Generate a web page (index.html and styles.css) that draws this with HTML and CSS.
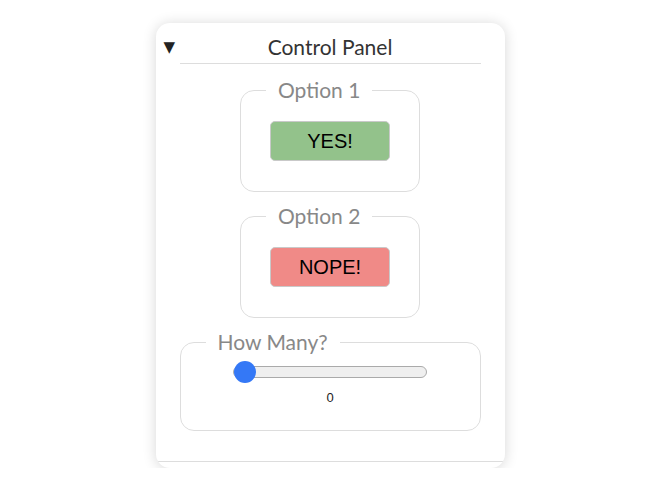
FILE: index.html
```html
<!DOCTYPE html>
<html lang="en">
<head>
  <meta charset="UTF-8">
  <title>Control Panel</title>
  <link rel="stylesheet" href="styles.css">
</head>
<body>

<div class="panel">
  <!-- 标题栏 -->
  <div class="panel-head">
    <span class="caret">&#9660;</span>
    <h3 class="title">Control Panel</h3>
  </div>

  <div class="panel-body">
    <fieldset class="group">
      <legend>Option 1</legend>
      <button class="btn btn-yes">YES!</button>
    </fieldset>

    <fieldset class="group">
      <legend>Option 2</legend>
      <button class="btn btn-no">NOPE!</button>
    </fieldset>

    <fieldset class="group group-wide">
      <legend>How Many?</legend>
      <input class="slider" type="range" min="0" max="10" value="0">
      <div class="count">0</div>
    </fieldset>
  </div>

  <div class="panel-foot"></div>
</div>

<script>
  var slider = document.querySelector(".slider");
  var count = document.querySelector(".count");
  slider.oninput = function() {
    count.innerHTML = slider.value;
  }
</script>

</body>
</html>
```

FILE: styles.css
```css
* {
  margin: 0;
  padding: 0;
  box-sizing: border-box;
}
body {
  font-family: Lato, "Noto Sans", sans-serif;
  background-color: #fff;
}
.panel {
  width: 349px;
  margin: 23px auto 0;
  padding-top: 12px;
  background-color: #fff;
  border-radius: 14px;
  box-shadow: 0 1px 14px rgba(0, 0, 0, 0.16);
  overflow: hidden;
}
/* 标题栏: 左边箭头, 中间标题 */
.panel-head {
  display: grid;
  grid-template-columns: 24px 1fr 24px;
  align-items: center;
}
.caret {
  padding-left: 8px;
  margin-bottom: 6px;
  font-family: "DejaVu Sans", sans-serif;
  font-size: 15px;
  line-height: 20px;
  color: #222;
}
.title {
  font-size: 21px;
  font-weight: normal;
  line-height: 24px;
  color: #333;
  text-align: center;
  padding-bottom: 4px;
  border-bottom: 1px solid #ddd;
}
.panel-body {
  display: flex;
  flex-direction: column;
  align-items: center;
  gap: 12px;
  padding: 14px 24px 30px;
}
.group {
  width: 180px;
  padding: 19px 0 30px;
  border: 1px solid #ddd;
  border-radius: 14px;
  text-align: center;
}
.group legend {
  margin-left: 25px;
  padding: 0 12px;
  font-size: 21px;
  line-height: 24px;
  color: #888;
  text-align: left;
}
.group-wide {
  width: 100%;
  padding: 7px 0 25px;
}
.btn {
  width: 120px;
  height: 40px;
  border: 1px solid #c9c9c9;
  border-radius: 5px;
  font-family: "Liberation Sans", Arial, sans-serif;
  font-size: 20px;
  color: #000;
  cursor: pointer;
}
.btn-yes {
  background-color: #93c28b;
}
.btn-no {
  background-color: #f08a87;
}
/* 滑块 */
.slider {
  display: block;
  -webkit-appearance: none;
  appearance: none;
  width: 194px;
  height: 22px;
  margin: 0 auto;
  background: transparent;
}
.slider::-webkit-slider-runnable-track {
  height: 12px;
  background-color: #efefef;
  border: 1px solid #aaa;
  border-radius: 6px;
}
.slider::-webkit-slider-thumb {
  -webkit-appearance: none;
  width: 22px;
  height: 22px;
  margin-top: -6px;
  border-radius: 50%;
  background-color: #3478f6;
}
.count {
  margin-top: 7px;
  font-family: "Liberation Sans", Arial, sans-serif;
  font-size: 13px;
  line-height: 15px;
  color: #222;
}
.panel-foot {
  height: 7px;
  border-top: 1px solid #ddd;
}
```
